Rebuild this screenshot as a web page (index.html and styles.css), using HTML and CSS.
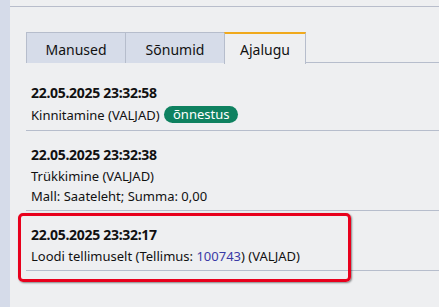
FILE: index.html
```html
<!DOCTYPE html>
<html lang="et">
<head>
    <meta charset="UTF-8">
    <meta name="viewport" content="width=device-width, initial-scale=1.0">
    <title>Ajalugu</title>
    <link rel="stylesheet" href="styles.css">
</head>
<body>
    <div class="layout">
        <div class="strip"></div>
        <div class="main">
            <div class="tabs">
                <div class="tab tab-manused">Manused</div>
                <div class="tab tab-sonumid">Sõnumid</div>
                <div class="tab tab-ajalugu active">Ajalugu</div>
            </div>
            <ul class="history">
                <li class="entry">
                    <div class="entry-date">22.05.2025 23:32:58</div>
                    <div class="entry-line with-badge">Kinnitamine (VALJAD) <span class="badge">õnnestus</span></div>
                </li>
                <li class="entry">
                    <div class="entry-date">22.05.2025 23:32:38</div>
                    <div class="entry-line">Trükkimine (VALJAD)</div>
                    <div class="entry-line">Mall: Saateleht; Summa: 0,00</div>
                </li>
                <li class="entry highlighted">
                    <div class="entry-date">22.05.2025 23:32:17</div>
                    <div class="entry-line">Loodi tellimuselt (Tellimus: <a class="link" href="#">100743</a>) (VALJAD)</div>
                    <div class="marker"></div>
                </li>
            </ul>
        </div>
    </div>
</body>
</html>
```

FILE: styles.css
```css
* {
    margin: 0;
    padding: 0;
    box-sizing: border-box;
    font-family: 'Noto Sans', sans-serif;
}

body {
    background-color: #eeeff1;
    color: #111;
    overflow: hidden;
}

.layout {
    display: flex;
    min-height: 307px;
}

.strip {
    width: 10px;
    background-color: #d5dbe9;
}

.main {
    flex: 1;
    margin-top: 6px;
    border-top: 1px solid #b8bdcb;
    padding: 25px 0 0 16px;
}

.tabs {
    display: flex;
    border-bottom: 1px solid #b6bdcc;
    height: 31px;
}

.tab {
    height: 31px;
    padding-top: 7px;
    line-height: 20px;
    font-size: 14px;
    text-align: center;
    color: #111;
    background-color: #d6dce9;
    border: 1px solid #b6bdcc;
    border-bottom: none;
}

.tab-manused {
    width: 100px;
}

.tab-sonumid {
    width: 99px;
    border-left: none;
}

.tab-ajalugu {
    width: 82px;
    border-left: 1px solid #b6bdcc;
}

.tab.active {
    background-color: #eeeff1;
    border-top: 2px solid #f0a91c;
    padding-top: 6px;
    height: 32px;
    margin-left: -1px;
}

.history {
    list-style-type: none;
    padding-top: 6px;
}

.entry {
    position: relative;
    padding: 12px 0 4px 5px;
    border-bottom: 1px solid #b6bdcc;
}

.entry-date {
    font-size: 14px;
    font-weight: 700;
    letter-spacing: -0.3px;
    line-height: 23px;
}

.entry-line {
    font-size: 13px;
    line-height: 20px;
}

.entry-line.with-badge {
    line-height: 22px;
}

.badge {
    display: inline-block;
    margin-left: 1px;
    padding: 0 9px;
    height: 17px;
    line-height: 17px;
    border-radius: 9px;
    background-color: #0e8160;
    color: #fff;
    font-size: 13px;
    vertical-align: 1px;
}

.link {
    color: #3a3aa6;
    text-decoration: none;
}

.marker {
    position: absolute;
    left: -8px;
    top: 2px;
    width: 333px;
    height: 69px;
    border: 3px solid #e8001c;
    border-radius: 5px;
    box-shadow: 1px 1px 2px rgba(0, 0, 0, 0.45);
}
```
